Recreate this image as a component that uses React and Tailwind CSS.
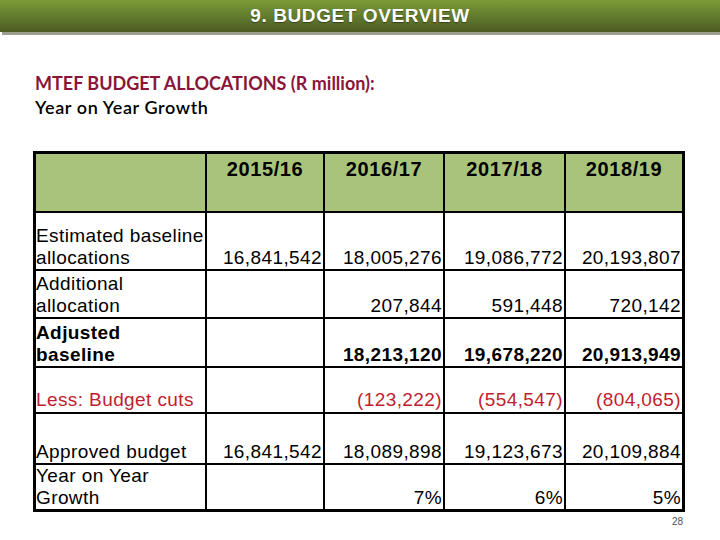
import React from "react";

const arial = { fontFamily: '"Liberation Sans", Arial, sans-serif' };

function Cell({ children, className = "" }) {
  return (
    <div className={"bg-white flex items-end justify-end pr-[1px] text-[19px] leading-[22px] tracking-[0.4px] " + className}>
      <span>{children}</span>
    </div>
  );
}

function Label({ children, className = "" }) {
  return (
    <div className={"bg-white flex items-end text-[19px] leading-[22px] tracking-[0.4px] " + className}>
      <div>{children}</div>
    </div>
  );
}

function Head({ children }) {
  return (
    <div className="bg-[#a9c47a] flex justify-center pt-[4px] font-bold text-[20px] leading-[22px] tracking-[0.6px]">
      {children}
    </div>
  );
}

export default function App() {
  return (
    <div className="w-[720px] h-[540px] bg-white relative overflow-hidden text-black" style={arial}>
      <div className="relative h-[35px]">
        <div className="absolute left-[2px] right-0 top-[31px] h-[4px] bg-[#9d9f8f]" />
        <div className="relative h-[32px] bg-gradient-to-b from-[#7c9c36] to-[#4c5c24] flex items-center justify-center">
          <span className="text-white font-bold text-[19px] tracking-[0.6px] [text-shadow:0_1px_1px_rgba(0,0,0,0.4)]">
            9. BUDGET OVERVIEW
          </span>
        </div>
      </div>

      <div className="pl-[35px] pt-[36px]" style={{ fontFamily: 'Lato, "Open Sans", sans-serif' }}>
        <div className="text-[#8a1538] font-bold text-[18px] leading-[24px]">
          MTEF BUDGET ALLOCATIONS (R million):
        </div>
        <div className="text-black text-[18px] leading-[24px] font-semibold tracking-[0.6px]">Year on Year Growth</div>
      </div>

      <div className="absolute left-[33px] top-[151px]">
        <div className="border-[3px] border-black bg-black grid gap-[2px] grid-cols-[169px_116px_118px_119px_116px] grid-rows-[57px_56px_46px_47px_44px_49px_44px]">
          <div className="bg-[#a9c47a]" />
          <Head>2015/16</Head>
          <Head>2016/17</Head>
          <Head>2017/18</Head>
          <Head>2018/19</Head>

          <Label>Estimated baseline<br />allocations</Label>
          <Cell>16,841,542</Cell>
          <Cell>18,005,276</Cell>
          <Cell>19,086,772</Cell>
          <Cell>20,193,807</Cell>

          <Label>Additional<br />allocation</Label>
          <Cell></Cell>
          <Cell>207,844</Cell>
          <Cell>591,448</Cell>
          <Cell>720,142</Cell>

          <Label className="font-bold">Adjusted<br />baseline</Label>
          <Cell></Cell>
          <Cell className="font-bold">18,213,120</Cell>
          <Cell className="font-bold">19,678,220</Cell>
          <Cell className="font-bold">20,913,949</Cell>

          <Label className="text-[#bf1e2e] pb-[1px]">Less: Budget cuts</Label>
          <Cell></Cell>
          <Cell className="text-[#bf1e2e] pb-[1px]">(123,222)</Cell>
          <Cell className="text-[#bf1e2e] pb-[1px]">(554,547)</Cell>
          <Cell className="text-[#bf1e2e] pb-[1px]">(804,065)</Cell>

          <Label>Approved budget</Label>
          <Cell>16,841,542</Cell>
          <Cell>18,089,898</Cell>
          <Cell>19,123,673</Cell>
          <Cell>20,109,884</Cell>

          <Label>Year on Year<br />Growth</Label>
          <Cell></Cell>
          <Cell>7%</Cell>
          <Cell>6%</Cell>
          <Cell>5%</Cell>
        </div>
      </div>

      <div className="absolute left-[672px] top-[516px] text-[10px] leading-[12px] text-[#44546a]">28</div>
    </div>
  );
}
